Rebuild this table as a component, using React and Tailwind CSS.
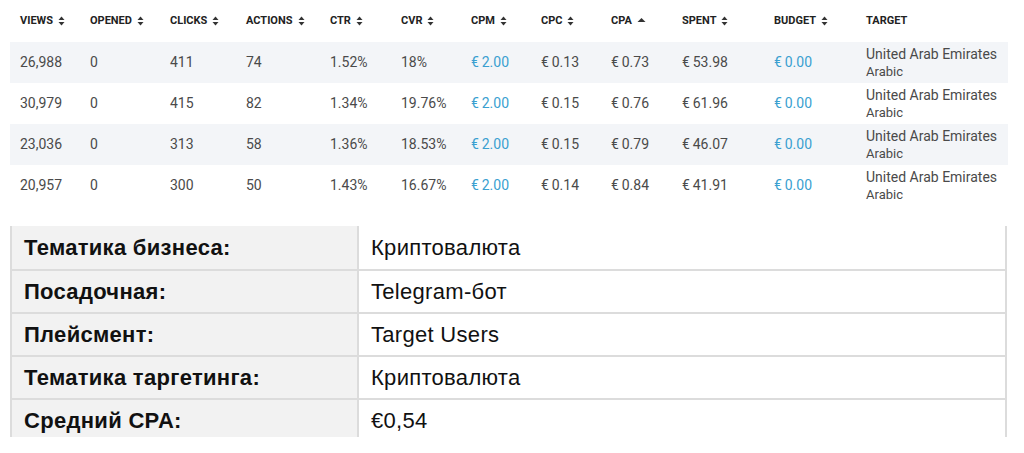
import React from 'react';

const columns = [
  { key: 'views', label: 'VIEWS', w: 'w-[70px]', sort: 'both' },
  { key: 'opened', label: 'OPENED', w: 'w-[80px]', sort: 'both' },
  { key: 'clicks', label: 'CLICKS', w: 'w-[76px]', sort: 'both' },
  { key: 'actions', label: 'ACTIONS', w: 'w-[84px]', sort: 'both' },
  { key: 'ctr', label: 'CTR', w: 'w-[71px]', sort: 'both' },
  { key: 'cvr', label: 'CVR', w: 'w-[70px]', sort: 'both' },
  { key: 'cpm', label: 'CPM', w: 'w-[70px]', sort: 'both', blue: true },
  { key: 'cpc', label: 'CPC', w: 'w-[70px]', sort: 'both' },
  { key: 'cpa', label: 'CPA', w: 'w-[71px]', sort: 'up' },
  { key: 'spent', label: 'SPENT', w: 'w-[92px]', sort: 'both' },
  { key: 'budget', label: 'BUDGET', w: 'w-[92px]', sort: 'both', blue: true },
  { key: 'target', label: 'TARGET', w: 'w-[142px]', sort: null },
];

const eur = (v) => `€\u2009${v}`;

const rows = [
  { views: '26,988', opened: '0', clicks: '411', actions: '74', ctr: '1.52%', cvr: '18%', cpm: eur('2.00'), cpc: eur('0.13'), cpa: eur('0.73'), spent: eur('53.98'), budget: eur('0.00') },
  { views: '30,979', opened: '0', clicks: '415', actions: '82', ctr: '1.34%', cvr: '19.76%', cpm: eur('2.00'), cpc: eur('0.15'), cpa: eur('0.76'), spent: eur('61.96'), budget: eur('0.00') },
  { views: '23,036', opened: '0', clicks: '313', actions: '58', ctr: '1.36%', cvr: '18.53%', cpm: eur('2.00'), cpc: eur('0.15'), cpa: eur('0.79'), spent: eur('46.07'), budget: eur('0.00') },
  { views: '20,957', opened: '0', clicks: '300', actions: '50', ctr: '1.43%', cvr: '16.67%', cpm: eur('2.00'), cpc: eur('0.14'), cpa: eur('0.84'), spent: eur('41.91'), budget: eur('0.00') },
];

const details = [
  ['Тематика бизнеса:', 'Криптовалюта'],
  ['Посадочная:', 'Telegram-бот'],
  ['Плейсмент:', 'Target Users'],
  ['Тематика таргетинга:', 'Криптовалюта'],
  ['Средний CPA:', '€0,54'],
];

const SortIcon = ({ mode }) =>
  mode === 'both' ? (
    <svg width="7" height="10" viewBox="0 0 7 10" className="ml-[5px] text-[#333]">
      <path d="M3.5 0.5 L6.5 4 H0.5 Z" fill="currentColor" />
      <path d="M3.5 9.5 L6.5 6 H0.5 Z" fill="currentColor" />
    </svg>
  ) : (
    <svg width="9" height="10" viewBox="0 0 9 10" className="ml-[5px] text-[#333]">
      <path d="M4.5 2 L8.5 6 H0.5 Z" fill="currentColor" />
    </svg>
  );

export default function App() {
  return (
    <div className="w-[1024px] h-[453px] bg-white overflow-hidden" style={{ fontFamily: 'Roboto, "Liberation Sans", sans-serif' }}>
      {/* stats table */}
      <div className="ml-[10px] w-[998px]">
        <div className="flex h-[42px] items-center">
          {columns.map((c) => (
            <div key={c.key} className={`${c.w} pl-[10px] flex items-center text-[11px] font-bold text-[#222]`}>
              <span>{c.label}</span>
              {c.sort && <SortIcon mode={c.sort} />}
            </div>
          ))}
        </div>
        {rows.map((r, i) => (
          <div key={i} className={`flex h-[41px] items-center text-[14px] text-[#4a4a4a] ${i % 2 === 0 ? 'bg-[#f3f5f8]' : 'bg-white'}`}>
            {columns.map((c) =>
              c.key === 'target' ? (
                <div key={c.key} className={`${c.w} pl-[10px] flex flex-col leading-[17px]`}>
                  <span className="text-[14px]">United Arab Emirates</span>
                  <span className="text-[13px]">Arabic</span>
                </div>
              ) : (
                <div key={c.key} className={`${c.w} pl-[10px] ${c.blue ? 'text-[#3a9fd0]' : ''}`}>
                  {r[c.key]}
                </div>
              )
            )}
          </div>
        ))}
      </div>

      {/* details table */}
      <div className="mt-[20px] ml-[10px] w-[997px] h-[211px] overflow-hidden border-l-2 border-r-2 border-[#dcdcdc]" style={{ fontFamily: '"Liberation Sans", Arial, sans-serif' }}>
        {details.map(([label, value], i) => (
          <div key={i} className={`flex h-[43px] ${i > 0 ? 'border-t-2 border-[#dcdcdc]' : ''}`}>
            <div className="w-[347px] shrink-0 bg-[#f2f2f2] border-r-2 border-[#dcdcdc] pl-[12px] flex items-center text-[22px] tracking-[0.3px] font-bold text-[#111]">
              {label}
            </div>
            <div className="flex-1 pl-[12px] flex items-center text-[22px] tracking-[0.3px] text-[#111]">
              {value}
            </div>
          </div>
        ))}
      </div>
    </div>
  );
}
